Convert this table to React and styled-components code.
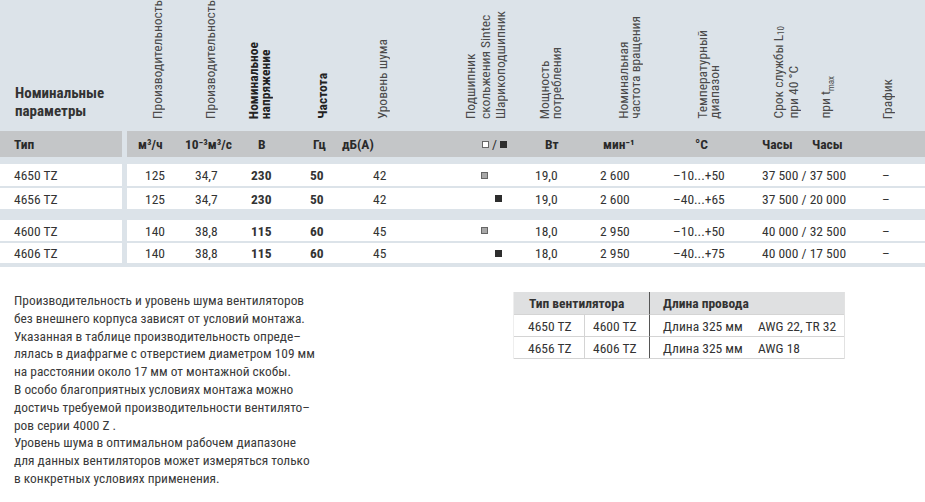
import React from 'react';
import styled, {createGlobalStyle} from 'styled-components';

const FONT = `"Roboto Condensed", "DejaVu Sans Condensed", "Liberation Sans", sans-serif`;
const BLUE = '#dce3e9';
const GREY = '#c4c6c8';
const INK = '#2e2e2e';

// widths + left paddings: r = rotated head, u = unit row, v = values
const COLS = [
  {w: 53, r: 24, u: 11, v: 18},
  {w: 55, r: 24, u: 5, v: 15},
  {w: 55, r: 12, u: 23, v: 16},
  {w: 45, r: 26, u: 23, v: 20},
  {w: 125, r: 41, u: 7, v: 38},
  {w: 70, r: 3, u: 22, v: 21},
  {w: 60, r: 8, u: 15, v: 5},
  {w: 75, r: 27, u: 13, v: 10},
  {w: 90, r: 31, u: 30, v: 8},
  {w: 50, r: 17, u: 7, v: 7},
  {w: 65, r: 14, u: 7, v: 7},
  {w: 55, r: 11, u: 7, v: 12},
];
const TEMPLATE = COLS.map(c => `${c.w}px`).join(' ');

const Global = createGlobalStyle`
  body {
    margin: 0;
    background: #fff;
    font-family: ${FONT};
    color: ${INK};
  }
`;

const Page = styled.div`
  width: 925px;
`;

const SpecTable = styled.div`
  background: ${BLUE};
  padding-bottom: 4px;
`;

const TopHead = styled.div`
  display: flex;
  height: 131px;
  overflow: hidden;
`;

const TitleBox = styled.div`
  width: 122px;
  box-sizing: border-box;
  padding: 0 0 11px 15px;
  display: flex;
  align-items: flex-end;
  font-weight: bold;
  font-size: 15px;
  line-height: 18px;
  color: #333;
`;

const ColGrid = styled.div`
  display: grid;
  grid-template-columns: ${TEMPLATE};
  margin-left: 5px;
  flex: 1;
  background: ${p => p.$bg || 'transparent'};
  align-items: ${p => p.$align || 'center'};
`;

const RotCell = styled.div`
  padding: 0 0 12px ${p => p.$pad}px;
  display: flex;
  justify-content: flex-start;
`;

const RotText = styled.div`
  writing-mode: vertical-rl;
  transform: rotate(180deg);
  white-space: pre;
  font-size: 13.5px;
  line-height: ${p => p.$lh || 12}px;
  font-weight: ${p => (p.$bold ? 'bold' : 'normal')};
  color: ${p => (p.$bold ? '#222' : '#4a4a4a')};
`;

const Small = styled.span`
  font-size: 9px;
  vertical-align: ${p => (p.$sub ? '-6px' : '-3px')};
`;

const UnitRow = styled.div`
  display: flex;
  height: 26px;
  margin-bottom: 7px;
  font-weight: bold;
  font-size: 13.5px;
  color: #2a2a2a;
`;

const TypeCell = styled.div`
  width: 122px;
  box-sizing: border-box;
  padding-left: 14px;
  display: flex;
  align-items: center;
  background: ${p => p.$bg};
  font-weight: ${p => (p.$bold ? 'bold' : 'normal')};
`;

const Cell = styled.div`
  padding-left: ${p => p.$pad}px;
  white-space: nowrap;
  font-weight: ${p => (p.$bold ? 'bold' : 'normal')};
  display: flex;
  align-items: center;
`;

const Group = styled.div`
  display: flex;
  flex-direction: column;
  gap: 2px;
  margin-bottom: ${p => p.$mb}px;
`;

const DataRow = styled.div`
  display: flex;
  height: ${p => p.$h}px;
  font-size: 13.5px;
  color: #333;
`;

const Square = styled.span`
  display: inline-block;
  width: 7px;
  height: 7px;
  box-sizing: border-box;
  background: ${p => (p.$dark ? '#2d2d2d' : p.$open ? '#fff' : '#a8a8a8')};
  border: 1px solid ${p => (p.$dark ? '#2d2d2d' : '#666')};
`;

const Slash = styled.span`
  margin: 0 3px;
  font-weight: normal;
`;

const Bottom = styled.div`
  display: flex;
  align-items: flex-start;
  margin-top: 25px;
`;

const Note = styled.div`
  width: 513px;
  box-sizing: border-box;
  padding-left: 14px;
  font-size: 13.4px;
  line-height: 17.8px;
  color: #3a3a3a;
`;

const WireTable = styled.div`
  width: 330px;
  display: grid;
  grid-template-columns: 71px 65px 98px 96px;
  font-size: 13.5px;
  color: #333;
  border-right: 1px solid #e2e2e2;
  border-left: 1px solid #eee;
`;

const WireHead = styled.div`
  grid-column: span 2;
  height: 22px;
  display: flex;
  align-items: center;
  padding-left: ${p => p.$pad}px;
  background: #dfe0e1;
  font-weight: bold;
  border-right: ${p => (p.$split ? '1px solid #555' : 'none')};
`;

const WireCell = styled.div`
  height: 21px;
  display: flex;
  align-items: center;
  padding-left: ${p => p.$pad}px;
  border-top: 1px solid #d4d4d4;
  border-right: ${p => (p.$split === 'dark' ? '1px solid #555' : p.$split ? '1px solid #d4d4d4' : 'none')};
  white-space: nowrap;
`;

const WireEnd = styled.div`
  grid-column: span 4;
  border-top: 1px solid #d4d4d4;
`;

const HEAD = [
  {t: 'Производительность'},
  {t: 'Производительность'},
  {t: 'Номинальное\nнапряжение', b: true},
  {t: 'Частота', b: true},
  {t: 'Уровень шума'},
  {t: 'Подшипник\nскольжения Sintec\nШарикоподшипник', lh: 15},
  {t: 'Мощность\nпотребления'},
  {t: 'Номинальная\nчастота вращения'},
  {t: 'Температурный\nдиапазон'},
  {t: <>Срок службы L<Small>10</Small>{'\n'}при 40 °C</>},
  {t: <>при t<Small $sub>max</Small></>},
  {t: 'График'},
];

const UNITS = [
  'м³/ч',
  '10⁻³м³/с',
  'В',
  'Гц',
  'дБ(А)',
  <><Square $open /><Slash>/</Slash><Square $dark /></>,
  'Вт',
  'мин⁻¹',
  '°C',
  'Часы',
  'Часы',
  '',
];

const BOLD = [2, 3];

const GROUPS = [
  [
    ['4650 TZ', '125', '34,7', '230', '50', '42', 'light', '19,0', '2 600', '–10...+50', '37 500 / 37 500', '', '–'],
    ['4656 TZ', '125', '34,7', '230', '50', '42', 'dark', '19,0', '2 600', '–40...+65', '37 500 / 20 000', '', '–'],
  ],
  [
    ['4600 TZ', '140', '38,8', '115', '60', '45', 'light', '18,0', '2 950', '–10...+50', '40 000 / 32 500', '', '–'],
    ['4606 TZ', '140', '38,8', '115', '60', '45', 'dark', '18,0', '2 950', '–40...+75', '40 000 / 17 500', '', '–'],
  ],
];

const Row = ({data, h}) => (
  <DataRow $h={h}>
    <TypeCell $bg="#fff">{data[0]}</TypeCell>
    <ColGrid $bg="#fff">
      {data.slice(1).map((val, i) => {
        if (i === 5) {
          const dark = val === 'dark';
          return (
            <Cell key={i} $pad={dark ? 35 : 21}>
              <Square $dark={dark} />
            </Cell>
          );
        }
        return (
          <Cell key={i} $pad={COLS[i].v} $bold={BOLD.includes(i)}>
            {val}
          </Cell>
        );
      })}
    </ColGrid>
  </DataRow>
);

const App = () => (
  <Page>
    <Global />
    <SpecTable>
      <TopHead>
        <TitleBox>Номинальные<br />параметры</TitleBox>
        <ColGrid $align="end">
          {HEAD.map((h, i) => (
            <RotCell key={i} $pad={COLS[i].r}>
              <RotText $bold={h.b} $lh={h.lh}>{h.t}</RotText>
            </RotCell>
          ))}
        </ColGrid>
      </TopHead>
      <UnitRow>
        <TypeCell $bg={GREY} $bold>Тип</TypeCell>
        <ColGrid $bg={GREY}>
          {UNITS.map((u, i) => (
            <Cell key={i} $pad={COLS[i].u} $bold>{u}</Cell>
          ))}
        </ColGrid>
      </UnitRow>
      <Group $mb={11}>
        <Row data={GROUPS[0][0]} h={22} />
        <Row data={GROUPS[0][1]} h={21} />
      </Group>
      <Group $mb={0}>
        <Row data={GROUPS[1][0]} h={21} />
        <Row data={GROUPS[1][1]} h={20} />
      </Group>
    </SpecTable>
    <Bottom>
      <Note>
        Производительность и уровень шума вентиляторов<br />
        без внешнего корпуса зависят от условий монтажа.<br />
        Указанная в таблице производительность опреде–<br />
        лялась в диафрагме с отверстием диаметром 109 мм<br />
        на расстоянии около 17 мм от монтажной скобы.<br />
        В особо благоприятных условиях монтажа можно<br />
        достичь требуемой производительности вентилято–<br />
        ров серии 4000 Z .<br />
        Уровень шума в оптимальном рабочем диапазоне<br />
        для данных вентиляторов может измеряться только<br />
        в конкретных условиях применения.
      </Note>
      <WireTable>
        <WireHead $pad={15} $split>Тип вентилятора</WireHead>
        <WireHead $pad={13}>Длина провода</WireHead>
        <WireCell $pad={14} $split>4650 TZ</WireCell>
        <WireCell $pad={8} $split="dark">4600 TZ</WireCell>
        <WireCell $pad={13}>Длина 325 мм</WireCell>
        <WireCell $pad={10}>AWG 22, TR 32</WireCell>
        <WireCell $pad={14} $split>4656 TZ</WireCell>
        <WireCell $pad={8} $split="dark">4606 TZ</WireCell>
        <WireCell $pad={13}>Длина 325 мм</WireCell>
        <WireCell $pad={10}>AWG 18</WireCell>
        <WireEnd />
      </WireTable>
    </Bottom>
  </Page>
);

export default App;
